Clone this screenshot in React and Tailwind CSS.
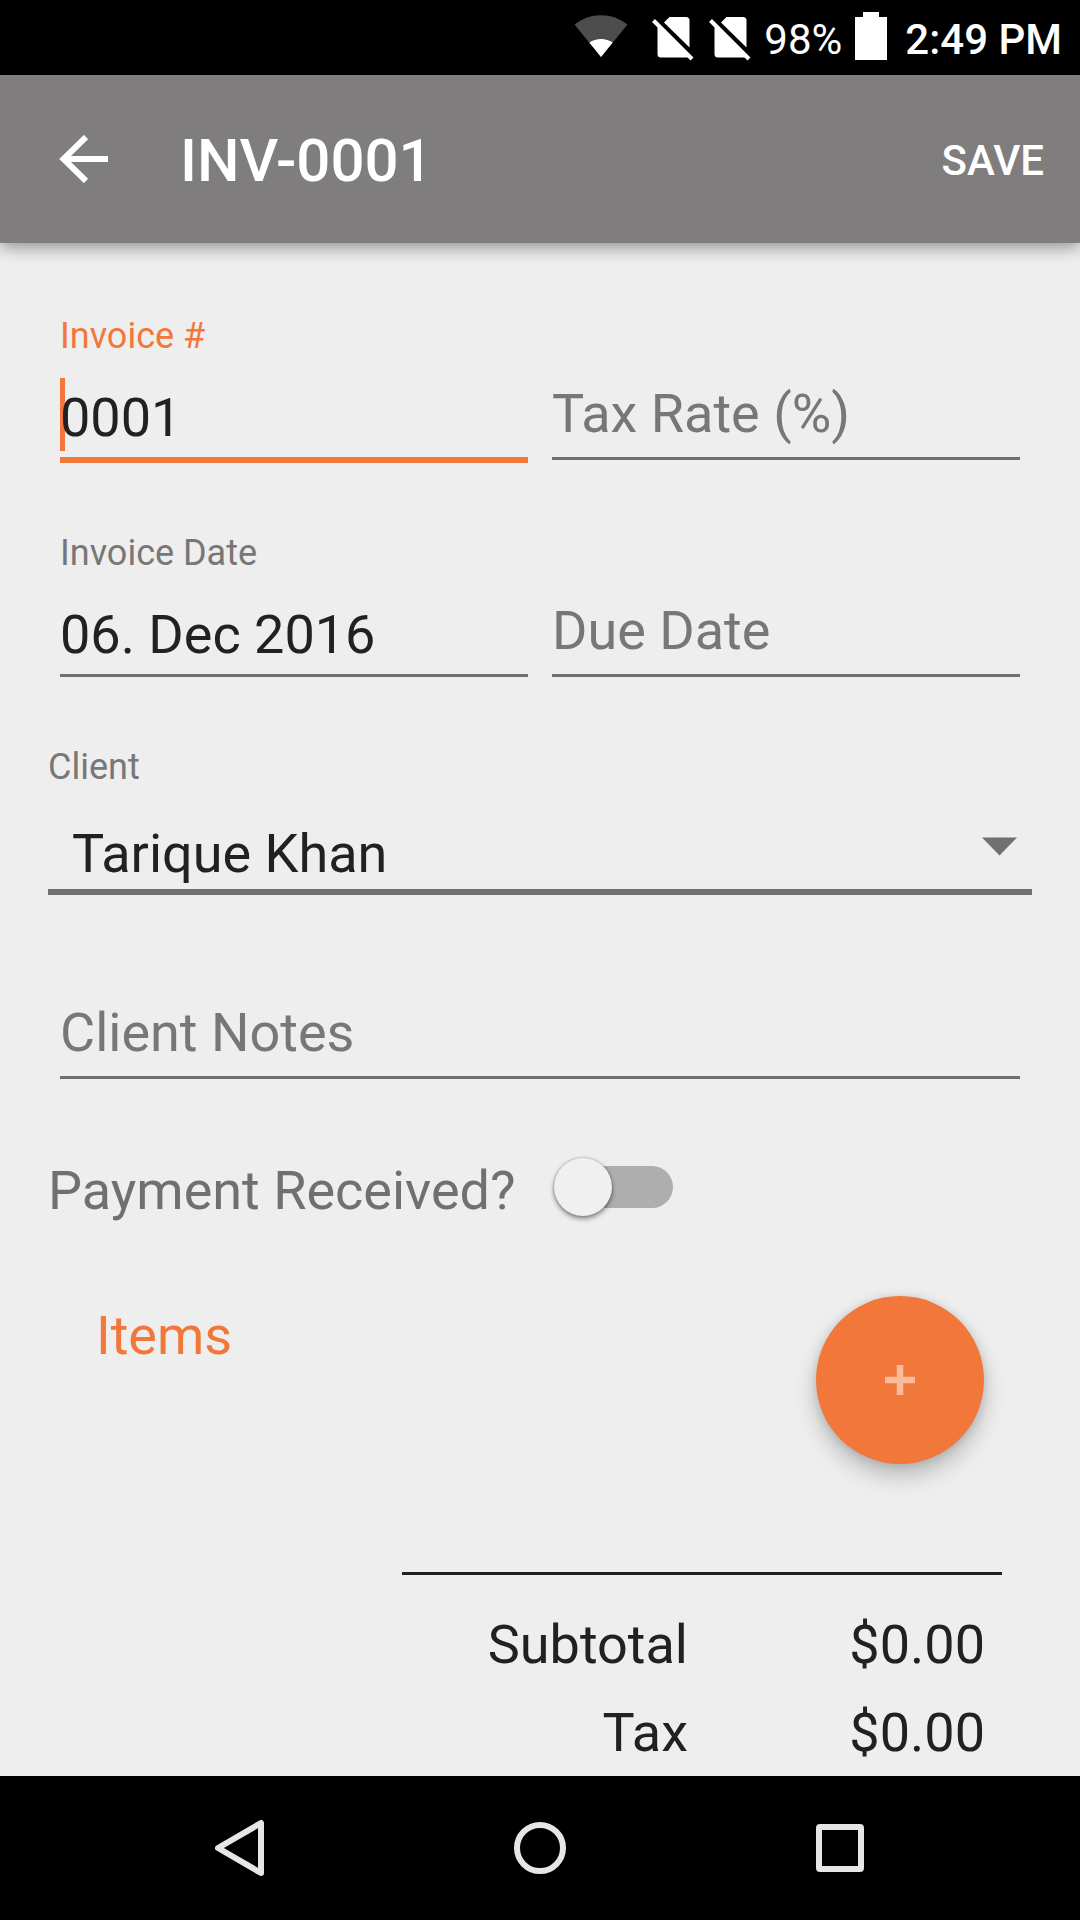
import React, { useState } from "react";

function WifiIcon() {
  return (
    <svg className="h-[42px] w-[54px]" viewBox="0 0 54 42" aria-hidden="true">
      <path d="M0.5 9.5 C16 -3 38 -3 53.5 9.5 L27 42 Z" fill="#4d4d4d" />
      <path d="M15.3 27.5 C22 22.8 32 22.8 38.7 27.5 L27 42 Z" fill="#fff" />
    </svg>
  );
}

function NoSimIcon() {
  return (
    <svg className="h-[46px] w-[42px]" viewBox="0 0 42 46" aria-hidden="true">
      <path d="M17.5 1 H34 Q37.5 1 37.5 4.5 V31.5 L12 6.5 Z" fill="#fff" />
      <path d="M5.5 11 L37 41.5 H9 Q5.5 41.5 5.5 38 Z" fill="#fff" />
      <path d="M1.5 4.5 L40 43" stroke="#fff" strokeWidth="4" />
    </svg>
  );
}

function StatusBar() {
  return (
    <header className="flex h-[75px] items-center justify-end bg-black pr-[18px] pb-[3px] text-[42px] leading-[48px] text-white">
      <WifiIcon />
      <div className="ml-6 flex gap-[15px] pt-1.5">
        <NoSimIcon />
        <NoSimIcon />
      </div>
      <span className="ml-[13px] pt-2">98%</span>
      <svg className="mr-[18px] ml-[13px] h-12 w-8" viewBox="0 0 32 48" aria-hidden="true">
        <path d="M8 0 H24 V5 H32 V48 H0 V5 H8 Z" fill="#fff" />
      </svg>
      <span className="pt-2 font-medium">2:49 PM</span>
    </header>
  );
}

function AppBar() {
  return (
    <div className="relative z-10 flex h-[168px] items-center bg-[#7f7d7e] px-9 text-white shadow-[0_4px_16px_rgba(0,0,0,0.4)]">
      <button type="button" aria-label="Back" className="p-3">
        <svg className="h-12 w-[72px]" viewBox="0 0 72 48" aria-hidden="true">
          <path d="M38 2 L15.5 24 L38 46 M16 24 H60" fill="none" stroke="#fff" strokeWidth="6" />
        </svg>
      </button>
      <h1 className="ml-12 flex-1 pt-1 text-[60px] leading-[72px] font-medium">INV-0001</h1>
      <button type="button" className="pt-1 text-[42px] leading-[48px] font-medium">
        SAVE
      </button>
    </div>
  );
}

function Field({ id, label, value, focused }) {
  const [text, setText] = useState(value || "");
  const filled = Boolean(value);
  return (
    <div className="relative flex flex-col pt-12">
      {filled && (
        <label
          htmlFor={id}
          className={
            "absolute top-0 left-0 text-[36px] leading-[48px] " + (focused ? "text-[#f1783a]" : "text-[#777777]")
          }
        >
          {label}
        </label>
      )}
      {focused && <span className="absolute top-[66px] left-0 h-[73px] w-[5px] bg-[#f1783a]" />}
      <input
        id={id}
        type="text"
        aria-label={label}
        value={text}
        placeholder={label}
        onChange={(e) => setText(e.target.value)}
        className={
          "relative h-[100px] w-full border-b-[3px] bg-transparent text-[54px] text-[#212121] outline-none placeholder:text-[#777777] placeholder:opacity-100 " +
          (filled ? "pt-[18px] " : "pt-[10px] ") +
          (focused ? "border-[#f1783a] shadow-[0_3px_0_#f1783a]" : "border-[#707070]")
        }
      />
    </div>
  );
}

function ClientSelect() {
  return (
    <div className="mx-12 mt-[66px] flex flex-col">
      <label htmlFor="client" className="text-[36px] leading-[48px] text-[#777777]">
        Client
      </label>
      <div className="relative">
        <select
          id="client"
          className="block h-[104px] w-full appearance-none border-b-[6px] border-[#707070] bg-transparent pt-[22px] pl-6 text-[54px] text-[#212121] outline-none"
        >
          <option>Tarique Khan</option>
        </select>
        <svg
          className="pointer-events-none absolute top-[46px] right-[15px] h-[19px] w-[35px]"
          viewBox="0 0 35 19"
          aria-hidden="true"
        >
          <path d="M0 0.5 H35 L17.5 18.5 Z" fill="#707070" />
        </svg>
      </div>
    </div>
  );
}

function PaymentSwitch() {
  return (
    <div className="mx-12 mt-[76px] flex h-[72px] items-center">
      <label htmlFor="paid" className="text-[54px] leading-[72px] text-[#707070]">
        Payment Received?
      </label>
      <input
        id="paid"
        type="checkbox"
        role="switch"
        className="relative mb-2 ml-[46px] h-[42px] w-[111px] appearance-none rounded-full bg-[#aeaeae] before:absolute before:-top-2 before:-left-2 before:size-[58px] before:rounded-full before:bg-[#f0f0f0] before:shadow-[0_3px_5px_rgba(0,0,0,0.4),0_0_3px_rgba(0,0,0,0.3)]"
      />
    </div>
  );
}

const totals = [
  { label: "Subtotal", amount: "$0.00" },
  { label: "Tax", amount: "$0.00" },
];

function Items() {
  return (
    <section className="mt-[69px]">
      <div className="flex items-start justify-between px-24">
        <h2 className="pt-1 text-[54px] leading-[72px] text-[#f1783a]">Items</h2>
        <button
          type="button"
          aria-label="Add item"
          className="flex size-[168px] items-center justify-center rounded-full bg-[#f1783a] shadow-[0_12px_22px_rgba(0,0,0,0.22),0_1px_10px_rgba(0,0,0,0.12)]"
        >
          <svg className="size-[30px]" viewBox="0 0 30 30" aria-hidden="true">
            <path d="M15 0 V30 M0 15 H30" stroke="#fabb9c" strokeWidth="6.5" />
          </svg>
        </button>
      </div>
      <div className="mt-[108px] mr-[78px] ml-auto w-[600px] border-t-[3px] border-[#212121] pt-[18px]">
        <table className="w-full text-right text-[54px] leading-[72px] text-[#212121]">
          <tbody>
            {totals.map((row) => (
              <tr key={row.label}>
                <th scope="row" className="w-[286px] pt-4 text-right font-normal">
                  {row.label}
                </th>
                <td className="pt-4 pr-[17px]">{row.amount}</td>
              </tr>
            ))}
          </tbody>
        </table>
      </div>
    </section>
  );
}

function NavBar() {
  return (
    <nav className="grid h-36 grid-cols-3 items-center bg-black px-[90px]">
      <button type="button" aria-label="Back" className="flex justify-center">
        <svg className="h-[60px] w-[60px]" viewBox="0 0 60 60" aria-hidden="true">
          <path d="M51 5 V55 L8 30 Z" fill="none" stroke="#e6e6e6" strokeWidth="6" strokeLinejoin="round" />
        </svg>
      </button>
      <button type="button" aria-label="Home" className="flex justify-center">
        <svg className="h-[60px] w-[60px]" viewBox="0 0 60 60" aria-hidden="true">
          <circle cx="30" cy="30" r="23" fill="none" stroke="#e6e6e6" strokeWidth="6" />
        </svg>
      </button>
      <button type="button" aria-label="Recent apps" className="flex justify-center">
        <svg className="h-[60px] w-[60px]" viewBox="0 0 60 60" aria-hidden="true">
          <rect x="9" y="9" width="42" height="42" rx="1" fill="none" stroke="#e6e6e6" strokeWidth="6" strokeLinejoin="round" />
        </svg>
      </button>
    </nav>
  );
}

export default function App() {
  return (
    <div className="flex min-h-screen flex-col bg-[#eeeeee] font-['Roboto',sans-serif]">
      <StatusBar />
      <AppBar />
      <main className="flex-1 pt-[69px]">
        <div className="mx-[60px] grid grid-cols-2 gap-x-6 gap-y-[69px]">
          <Field id="number" label="Invoice #" value="0001" focused />
          <Field id="tax" label="Tax Rate (%)" />
          <Field id="date" label="Invoice Date" value="06. Dec 2016" />
          <Field id="due" label="Due Date" />
        </div>
        <ClientSelect />
        <div className="mx-[60px] mt-9">
          <Field id="notes" label="Client Notes" />
        </div>
        <PaymentSwitch />
        <Items />
      </main>
      <NavBar />
    </div>
  );
}
